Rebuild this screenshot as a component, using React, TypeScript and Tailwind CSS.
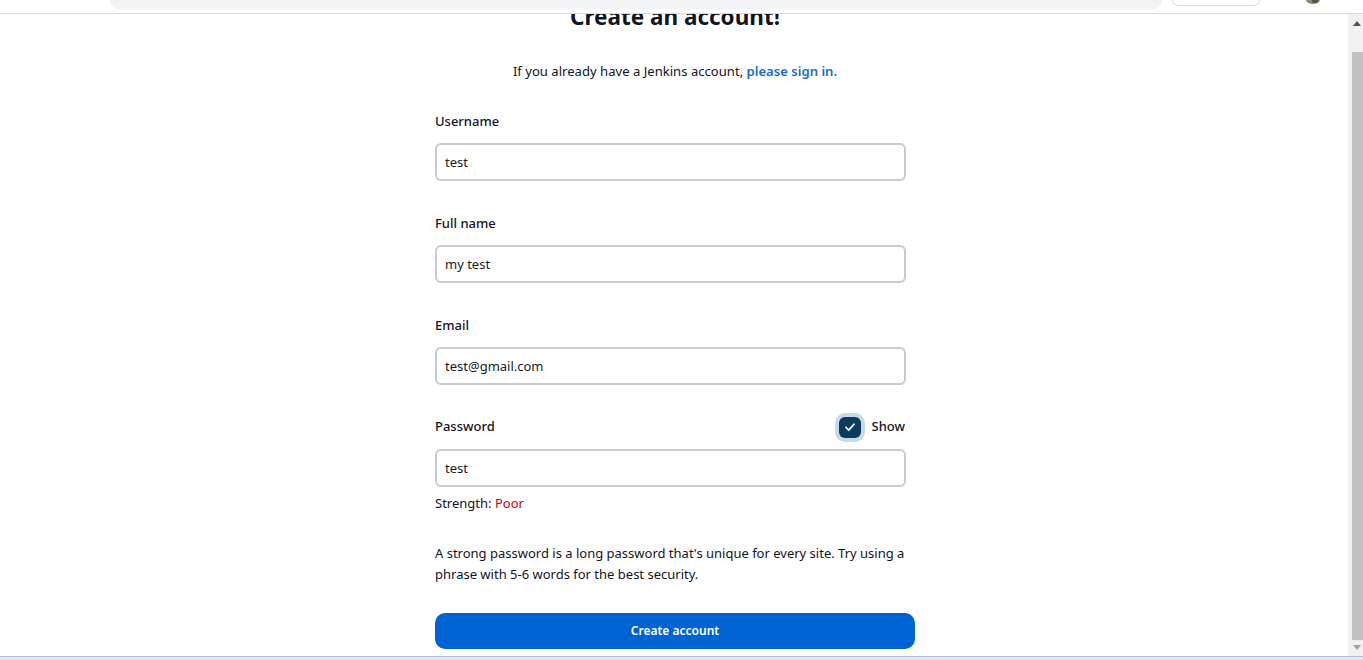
import React from 'react';

const font = { fontFamily: '"Noto Sans", "Open Sans", Arial, sans-serif' };

const Field: React.FC<{ label: string; value: string; first?: boolean }> = ({ label, value, first }) => (
  <div className={first ? 'mt-[30px]' : 'mt-[32px]'}>
    <div className="text-[13px] leading-[20px] font-medium text-[#14141f]">{label}</div>
    <div className="mt-[12px] w-[471px] h-[38px] rounded-[6px] border-2 border-[#c5cdd2] flex items-center px-[8px] pt-[2px] text-[13px] text-[#1b1b26]">
      {value}
    </div>
  </div>
);

export default function App() {
  return (
    <div className="w-[1363px] h-[660px] flex flex-col overflow-hidden bg-white" style={font}>
      {/* browser chrome remnant */}
      <div className="h-[14px] shrink-0 border-b border-[#dadce0] flex items-start">
        <div className="ml-[110px] w-[1052px] h-[9px] rounded-b-[10px] bg-[#f1f3f4]" />
        <div className="ml-[10px] w-[88px] h-[6px] rounded-b-[8px] border border-t-0 border-[#dadce0]" />
        <svg className="ml-[45px]" width="16" height="5" viewBox="0 0 16 5">
          <ellipse cx="8" cy="0" rx="7" ry="4" fill="#8f8a78" />
          <ellipse cx="10" cy="1" rx="3" ry="2" fill="#5b5547" />
        </svg>
      </div>

      <div className="flex flex-1 min-h-0">
        <main className="flex-1 overflow-hidden pl-[2px]">
          <div className="mt-[-13px] w-[480px] mx-auto flex flex-col">
            <h1 className="text-center text-[22.5px] leading-[32px] font-bold text-[#14141f]">Create an account!</h1>
            <p className="mt-[28px] text-center text-[13.1px] leading-[20px] text-[#14141f]">
              If you already have a Jenkins account,{' '}
              <span className="font-semibold text-[#1a6bd1]">please sign in.</span>
            </p>

            <Field label="Username" value="test" first />
            <Field label="Full name" value="my test" />
            <Field label="Email" value="test@gmail.com" />

            <div className="mt-[31px] w-[471px] h-[22px] flex items-center justify-between">
              <span className="text-[13px] font-medium text-[#14141f]">Password</span>
              <div className="flex items-center gap-[11px] mr-[1px]">
                <div className="w-[22px] h-[21px] rounded-[6px] bg-[#0b3b5e] ring-4 ring-[#c5dbea] flex items-center justify-center">
                  <svg width="14" height="14" viewBox="0 0 14 14" fill="none">
                    <path d="M3 7.4l2.7 2.7 5.3-5.9" stroke="white" strokeWidth="1.7" strokeLinecap="round" strokeLinejoin="round" />
                  </svg>
                </div>
                <span className="text-[13px] font-medium text-[#14141f]">Show</span>
              </div>
            </div>
            <div className="mt-[11px] w-[471px] h-[38px] rounded-[6px] border-2 border-[#c5cdd2] flex items-center px-[8px] pt-[2px] text-[13px] text-[#1b1b26]">
              test
            </div>
            <div className="mt-[6px] text-[13px] leading-[20px] text-[#14141f]">
              Strength: <span className="text-[#cc0011]">Poor</span>
            </div>

            <p className="mt-[30px] text-[13px] leading-[21px] text-[#14141f]">
              A strong password is a long password that's unique for every site. Try using a phrase with 5-6 words for the best security.
            </p>

            <button className="mt-[28px] h-[36px] w-[480px] rounded-[10px] bg-[#0063d3] text-white text-[12px] font-semibold">
              Create account
            </button>
          </div>
        </main>

        {/* scrollbar */}
        <div className="w-[15px] shrink-0 bg-[#f1f1f1] flex flex-col">
          <div className="h-[38px] flex justify-center pt-[7px] pl-[3px]">
            <svg width="8" height="5" viewBox="0 0 8 5"><path d="M0 5L4 0L8 5Z" fill="#505050" /></svg>
          </div>
          <div className="ml-[4px] h-[588px] bg-[#c1c1c1]" />
          <div className="flex justify-center pt-[5px] pl-[3px]">
            <svg width="8" height="5" viewBox="0 0 8 5"><path d="M0 0L8 0L4 5Z" fill="#a3a3a3" /></svg>
          </div>
        </div>
      </div>

      {/* taskbar edge */}
      <div className="h-[4px] shrink-0 border-t border-[#b4bccc] bg-[#dde6f3]" />
    </div>
  );
}
